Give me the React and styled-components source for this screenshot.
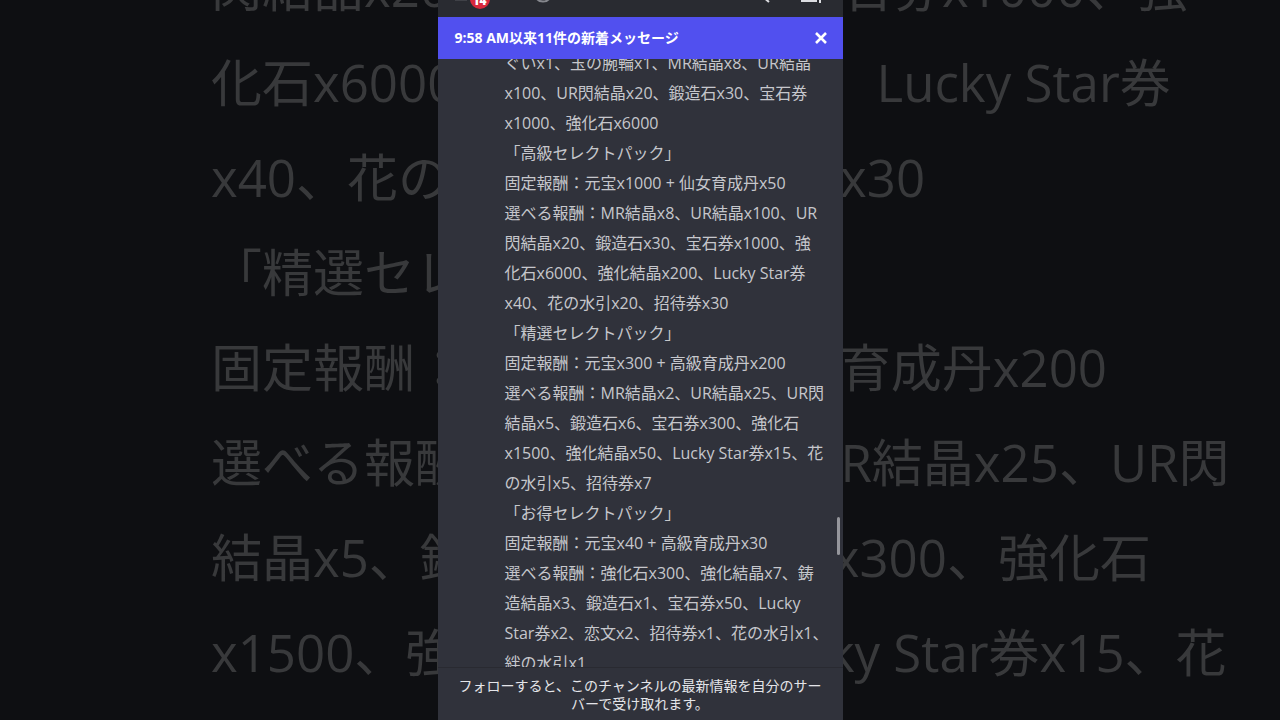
import React, { useState } from 'react';
import styled, { createGlobalStyle } from 'styled-components';

const GlobalStyle = createGlobalStyle`
    * {
        box-sizing: border-box;
    }

    body {
        margin: 0;
        background: #0e0f12;
        font-family: 'Open Sans', 'Noto Sans CJK JP', sans-serif;
        text-spacing-trim: space-all;
    }
`;

const Stage = styled.div`
    position: relative;
    display: flex;
    justify-content: center;
    height: 100vh;
    overflow: hidden;
`;

// Enlarged, dimmed copy of the conversation behind the phone screen
const Backdrop = styled.div`
    position: absolute;
    inset: -60px 0 0;
    padding-left: 211px;
    overflow: hidden;
    color: #38393b;
    font-size: 51px;
    line-height: 95px;
    white-space: nowrap;
`;

const Phone = styled.main`
    position: relative;
    display: flex;
    flex-direction: column;
    height: 100%;
    aspect-ratio: 9 / 16;
    background: #30323b;
`;

const TopBar = styled.header`
    display: flex;
    align-items: flex-end;
    justify-content: space-between;
    height: 17px;
    padding: 0 20px 8px 17px;
    background: #292b31;
    flex-shrink: 0;
`;

const TopGroup = styled.div`
    display: flex;
    align-items: flex-end;
    gap: ${props => props.$gap}px;
`;

const MenuButton = styled.div`
    display: flex;
    align-items: flex-end;
    gap: 3px;
`;

const Badge = styled.span`
    width: 20px;
    height: 20px;
    border-radius: 50%;
    background: #d8283c;
    color: #fff;
    font-size: 12px;
    font-weight: 800;
    line-height: 24px;
    text-align: center;
`;

const NewMessages = styled.div`
    display: flex;
    align-items: center;
    justify-content: space-between;
    height: 42px;
    padding: 0 15px 2px 17px;
    background: #5150ef;
    color: #fff;
    font-size: 14px;
    font-weight: 700;
    flex-shrink: 0;
`;

const CloseButton = styled.button`
    display: flex;
    padding: 2px 0 0;
    border: none;
    background: none;
    color: inherit;
    cursor: pointer;
`;

const Messages = styled.section`
    position: relative;
    flex: 1;
    min-height: 0;
    overflow: hidden;
    padding-left: 67px;
    color: #c6c7cc;
    font-size: 16px;
    line-height: 30px;
    white-space: nowrap;
`;

const MessageText = styled.div`
    margin-top: -11px;
`;

const ScrollThumb = styled.div`
    position: absolute;
    top: 458px;
    right: 3px;
    width: 3px;
    height: 38px;
    border-radius: 2px;
    background: #95969c;
`;

const FollowNote = styled.footer`
    padding: 9px 4px 7px;
    border-top: 1px solid #292a31;
    color: #e4e5e9;
    font-size: 14px;
    line-height: 18px;
    text-align: center;
    flex-shrink: 0;
`;

const lines = [
    'ぐいx1、玉の腕輪x1、MR結晶x8、UR結晶',
    'x100、UR閃結晶x20、鍛造石x30、宝石券',
    'x1000、強化石x6000',
    '「高級セレクトパック」',
    '固定報酬：元宝x1000 + 仙女育成丹x50',
    '選べる報酬：MR結晶x8、UR結晶x100、UR',
    '閃結晶x20、鍛造石x30、宝石券x1000、強',
    '化石x6000、強化結晶x200、Lucky Star券',
    'x40、花の水引x20、招待券x30',
    '「精選セレクトパック」',
    '固定報酬：元宝x300 + 高級育成丹x200',
    '選べる報酬：MR結晶x2、UR結晶x25、UR閃',
    '結晶x5、鍛造石x6、宝石券x300、強化石',
    'x1500、強化結晶x50、Lucky Star券x15、花',
    'の水引x5、招待券x7',
    '「お得セレクトパック」',
    '固定報酬：元宝x40 + 高級育成丹x30',
    '選べる報酬：強化石x300、強化結晶x7、鋳',
    '造結晶x3、鍛造石x1、宝石券x50、Lucky',
    'Star券x2、恋文x2、招待券x1、花の水引x1、',
    '絆の水引x1',
];

const App = () => {
    const [showBar, setShowBar] = useState(true);

    return (
        <Stage lang="ja">
            <GlobalStyle />
            <Backdrop aria-hidden="true">
                {lines.slice(6, 14).map(line => <div key={line}>{line}</div>)}
            </Backdrop>
            <Phone>
                <TopBar>
                    <TopGroup $gap={45}>
                        <MenuButton>
                            <svg width="12" height="12" viewBox="0 0 12 12" fill="#3f4147">
                                <path d="M0 2h12v2H0z" />
                            </svg>
                            <Badge>14</Badge>
                        </MenuButton>
                        <svg width="16" height="12" viewBox="0 0 16 12" fill="none" stroke="#85878d" strokeWidth="2">
                            <path d="M1 0c2 6 12 6 14 0" />
                        </svg>
                    </TopGroup>
                    <TopGroup $gap={28}>
                        <svg width="10" height="12" viewBox="0 0 10 12" fill="none" stroke="#dcdde1" strokeWidth="2">
                            <path d="M2 0l6 5" />
                        </svg>
                        <svg width="24" height="12" viewBox="0 0 24 12" fill="#dcdde1">
                            <path d="M2 0h16v5H2zM20 0h2v6h-2z" />
                        </svg>
                    </TopGroup>
                </TopBar>
                {showBar && (
                    <NewMessages>
                        <span>9:58 AM以来11件の新着メッセージ</span>
                        <CloseButton aria-label="閉じる" onClick={() => setShowBar(false)}>
                            <svg width="14" height="14" viewBox="0 0 14 14" stroke="currentColor" strokeWidth="2.6">
                                <path d="M2 2l10 10M12 2L2 12" />
                            </svg>
                        </CloseButton>
                    </NewMessages>
                )}
                <Messages>
                    <MessageText>
                        {lines.map(line => <div key={line}>{line}</div>)}
                    </MessageText>
                    <ScrollThumb />
                </Messages>
                <FollowNote>
                    フォローすると、このチャンネルの最新情報を自分のサー<br />バーで受け取れます。
                </FollowNote>
            </Phone>
        </Stage>
    );
};

export default App;
